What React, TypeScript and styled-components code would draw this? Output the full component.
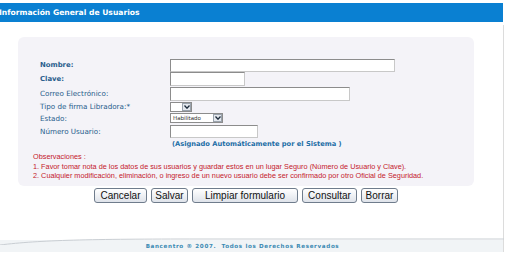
import React from "react";
import styled, { createGlobalStyle } from "styled-components";

const GlobalStyle = createGlobalStyle`
  html, body {
    margin: 0;
    padding: 0;
    background: #ffffff;
  }
  body {
    width: 508px;
    height: 260px;
    overflow: hidden;
    font-family: "DejaVu Sans", Verdana, sans-serif;
  }
`;

const Page = styled.div`
  width: 504px;
  padding-top: 3px;
`;

const Header = styled.div`
  height: 19px;
  background: #0a80d2;
  color: #ffffff;
  font-family: "DejaVu Sans", Verdana, sans-serif;
  font-weight: bold;
  font-size: 7.6px;
  line-height: 19px;
  margin-left: -1px;
  width: 504px;
`;

const Frame = styled.div`
  border-right: 1px solid #dcdcdc;
  margin-top: 3px;
  height: 227px;
  display: flex;
  flex-direction: column;
`;

const Panel = styled.div`
  margin: 12px 0 0 18px;
  width: 456px;
  height: 149px;
  box-sizing: border-box;
  background: #f4f3f8;
  border-radius: 6px;
  padding: 21px 0 0 22px;
`;

const FormGrid = styled.div`
  display: grid;
  grid-template-columns: 130px 1fr;
  align-items: center;
`;

const Cell = styled.div<{ $h: number }>`
  height: ${(p) => p.$h}px;
  display: flex;
  align-items: center;
`;

const Label = styled.span<{ $strong?: boolean }>`
  font-size: ${(p) => (p.$strong ? 6.9 : 7.2)}px;
  color: #285d8c;
  font-weight: ${(p) => (p.$strong ? "bold" : "normal")};
  white-space: nowrap;
`;

const TextBox = styled.div<{ $w: number; $h: number }>`
  width: ${(p) => p.$w}px;
  height: ${(p) => p.$h}px;
  box-sizing: border-box;
  background: #ffffff;
  border: 1px solid #8c8c8c;
  border-right-color: #c8c8c8;
  border-bottom-color: #c8c8c8;
`;

const Select = styled.div<{ $w: number }>`
  width: ${(p) => p.$w}px;
  height: 10px;
  box-sizing: border-box;
  background: #ffffff;
  border: 1px solid #8c8c8c;
  display: flex;
  align-items: center;
  justify-content: space-between;
  font-size: 5.5px;
  color: #333;
  padding-left: 2px;
`;

const Arrow = styled.span`
  width: 9px;
  height: 8px;
  box-sizing: border-box;
  border: 1px solid #9aa3ad;
  background: #e4e8ee;
  display: flex;
  align-items: center;
  justify-content: center;
`;

const Note = styled.span`
  font-size: 6.7px;
  font-weight: bold;
  color: #1d6ea6;
  padding-left: 2px;
  white-space: nowrap;
`;

const Remarks = styled.div`
  margin: 3px 0 0 -7px;
  font-family: "Liberation Sans", Arial, sans-serif;
  font-size: 7.3px;
  line-height: 9.5px;
  color: #c4202c;
  white-space: nowrap;
`;

const ButtonRow = styled.div`
  width: 456px;
  margin: 2px 0 0 18px;
  display: flex;
  justify-content: center;
  gap: 4px;
`;

const Button = styled.div<{ $w: number }>`
  width: ${(p) => p.$w}px;
  height: 15px;
  box-sizing: border-box;
  border: 1px solid #6f7c8c;
  border-radius: 3px;
  background: linear-gradient(#ffffff, #dfe3ea);
  font-family: "Liberation Sans", Arial, sans-serif;
  font-size: 10px;
  color: #111;
  display: flex;
  align-items: center;
  justify-content: center;
`;

const Footer = styled.div`
  margin-top: auto;
  position: relative;
  height: 12px;
  background: #f1f4f6;
  display: flex;
  align-items: center;
  justify-content: center;
`;

const Curve = styled.svg`
  position: absolute;
  left: 0;
  top: -3px;
`;

const FooterText = styled.span`
  position: relative;
  margin-left: -18px;
  font-family: "DejaVu Sans", Verdana, sans-serif;
  font-weight: bold;
  font-size: 5.6px;
  letter-spacing: 0.65px;
  color: #3b8ab3;
`;

const ArrowIcon = () => (
  <svg width="6" height="4" viewBox="0 0 6 4">
    <path d="M0.5 0.5 L3 3.2 L5.5 0.5" fill="none" stroke="#1c2a3a" strokeWidth="1.3" />
  </svg>
);

const rows = [
  { label: "Nombre:", strong: true, h: 14, field: <TextBox $w={225} $h={13} /> },
  { label: "Clave:", strong: true, h: 14, field: <TextBox $w={75} $h={14} /> },
  { label: "Correo Electrónico:", h: 15, field: <TextBox $w={180} $h={14} /> },
  {
    label: "Tipo de firma Libradora:*",
    h: 11,
    field: (
      <Select $w={22}>
        <span />
        <Arrow>
          <ArrowIcon />
        </Arrow>
      </Select>
    ),
  },
  {
    label: "Estado:",
    h: 12,
    field: (
      <Select $w={53}>
        <span>Habilitado</span>
        <Arrow>
          <ArrowIcon />
        </Arrow>
      </Select>
    ),
  },
  { label: "Número Usuario:", h: 15, field: <TextBox $w={88} $h={13} /> },
];

export default function App() {
  return (
    <Page>
      <GlobalStyle />
      <Header>Información General de Usuarios</Header>
      <Frame>
        <Panel>
          <FormGrid>
            {rows.map((r) => (
              <React.Fragment key={r.label}>
                <Cell $h={r.h}>
                  <Label $strong={r.strong}>{r.label}</Label>
                </Cell>
                <Cell $h={r.h}>{r.field}</Cell>
              </React.Fragment>
            ))}
            <Cell $h={10} />
            <Cell $h={10}>
              <Note>(Asignado Automáticamente por el Sistema )</Note>
            </Cell>
          </FormGrid>
          <Remarks>
            <div>Observaciones :</div>
            <div>
              1. Favor tomar nota de los datos de sus usuarios y guardar estos en un lugar Seguro (Número de Usuario y Clave).
            </div>
            <div>
              2. Cualquier modificación, eliminación, o ingreso de un nuevo usuario debe ser confirmado por otro Oficial de Seguridad.
            </div>
          </Remarks>
        </Panel>
        <ButtonRow>
          <Button $w={53}>Cancelar</Button>
          <Button $w={37}>Salvar</Button>
          <Button $w={106}>Limpiar formulario</Button>
          <Button $w={55}>Consultar</Button>
          <Button $w={37}>Borrar</Button>
        </ButtonRow>
        <Footer>
          <Curve width="504" height="8" viewBox="0 0 504 8">
            <path d="M0 8 C 40 3, 90 2, 200 2 L 504 2" fill="none" stroke="#c9ced3" strokeWidth="1" />
          </Curve>
          <FooterText>Bancentro ® 2007.&nbsp; Todos los Derechos Reservados</FooterText>
        </Footer>
      </Frame>
    </Page>
  );
}
